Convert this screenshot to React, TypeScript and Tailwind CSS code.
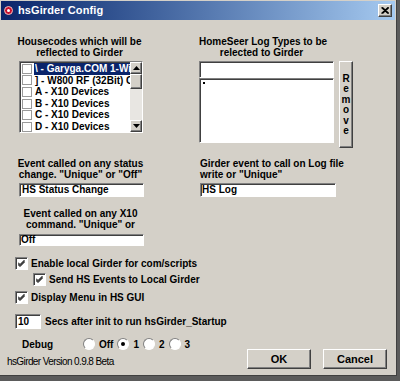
// App.tsx
// hsGirder Config — classic Win2k-style dialog.

const sunken =
  'border border-t-[#808080] border-l-[#808080] border-r-white border-b-white shadow-[inset_1px_1px_0_#404040]';
const raised =
  'border border-t-white border-l-white border-r-[#404040] border-b-[#404040] shadow-[inset_-1px_-1px_0_#808080]';

function Tick() {
  return (
    <svg width="7" height="7" viewBox="0 0 7 7" className="block">
      <path d="M0 2.5 L2 4.5 L6.5 0 M0 3.5 L2 5.5 L6.5 1 M0 4.5 L2 6.5 L6.5 2" stroke="#000" strokeWidth="1" fill="none" />
    </svg>
  );
}

function CheckBox({ checked = false }: { checked?: boolean }) {
  return (
    <span className={`w-[13px] h-[13px] bg-white flex items-center justify-center shrink-0 ${sunken}`}>
      {checked && <Tick />}
    </span>
  );
}

function Radio({ on = false }: { on?: boolean }) {
  return (
    <span className="relative w-[12px] h-[12px] rounded-full bg-white border border-t-[#808080] border-l-[#808080] border-r-white border-b-white shrink-0 flex items-center justify-center">
      {on && <span className="w-[4px] h-[4px] rounded-full bg-black" />}
    </span>
  );
}

function ListRow({ text, selected = false }: { text: string; selected?: boolean }) {
  return (
    <div className="h-[11.6px] flex items-center whitespace-nowrap">
      <span className="w-[10px] h-[10px] bg-white border border-[#9a9a9a] shrink-0 ml-[2px] mr-[2px]" />
      <span className={`px-[1px] leading-[11.6px] flex-1 ${selected ? 'bg-[#0a246a] text-white' : ''}`}>{text}</span>
    </div>
  );
}

function ScrollBar() {
  return (
    <div className="w-[12px] flex flex-col bg-[#e8e6e2] shrink-0">
      <div className={`h-[12px] bg-[#d4d0c8] flex items-center justify-center ${raised}`}>
        <svg width="7" height="4" viewBox="0 0 7 4"><path d="M3.5 0 L7 4 L0 4 Z" fill="#000" /></svg>
      </div>
      <div className={`h-[15px] bg-[#d4d0c8] ${raised}`} />
      <div className="flex-1" />
      <div className={`h-[12px] bg-[#d4d0c8] flex items-center justify-center ${raised}`}>
        <svg width="7" height="4" viewBox="0 0 7 4"><path d="M0 0 L7 0 L3.5 4 Z" fill="#000" /></svg>
      </div>
    </div>
  );
}

export default function App() {
  return (
    <div className="w-[400px] h-[381px] bg-[#5b5b5b] font-['Liberation_Sans',Arial,sans-serif] text-[10px] text-black select-none">
      <div className="w-[397px] h-[376px] bg-[#d4d0c8] border-r border-b border-[#404040] flex flex-col">
        {/* Title bar */}
        <div className="h-[19px] mx-[1px] mt-[1px] bg-gradient-to-r from-[#0a246a] to-[#a6caf0] flex items-center px-[3px]">
          <span className="w-[9px] h-[9px] rounded-full bg-[#c8102e] border border-[#f0c0c0] flex items-center justify-center">
            <span className="w-[3px] h-[3px] rounded-full bg-white" />
          </span>
          <span className="ml-[5px] text-white font-bold text-[11px] tracking-[0.1px]">hsGirder Config</span>
          <span className={`ml-auto w-[14px] h-[13px] bg-[#d4d0c8] flex items-center justify-center ${raised}`}>
            <svg width="8" height="7" viewBox="0 0 8 7"><path d="M0.5 0.5 L7 6.5 M7 0.5 L0.5 6.5 M1.5 0.5 L8 6.5 M8 0.5 L1.5 6.5" stroke="#000" strokeWidth="1.1" /></svg>
          </span>
        </div>

        {/* Body */}
        <div className="flex-1 flex flex-col pl-[17px] pr-[8px] pt-[16px] font-bold">
          {/* Top section */}
          <div className="flex">
            <div className="w-[125px] flex flex-col">
              <div className="text-center leading-[11px] h-[22px] whitespace-nowrap">
                Housecodes which will be<br />reflected to Girder
              </div>
              <div className={`mt-[3px] ml-[2px] w-[124px] h-[72px] bg-white flex ${sunken}`}>
                <div className="flex-1 overflow-hidden pt-[1px]">
                  <ListRow text="\ - Garyga.COM 1-Wire" selected />
                  <ListRow text="] - W800 RF (32Bit) Conv" />
                  <ListRow text="A - X10 Devices" />
                  <ListRow text="B - X10 Devices" />
                  <ListRow text="C - X10 Devices" />
                  <ListRow text="D - X10 Devices" />
                </div>
                <ScrollBar />
              </div>
            </div>

            <div className="ml-[57px] flex flex-col">
              <div className="w-[125px] text-center leading-[11px] h-[22px] whitespace-nowrap">
                HomeSeer Log Types to be<br />relected to Girder
              </div>
              <div className="mt-[3px] flex">
                <div className="w-[135px] flex flex-col">
                  <div className={`h-[17px] bg-white ${sunken}`} />
                  <div className={`h-[65px] bg-white pl-[3px] pt-[3px] ${sunken}`}>
                    <span className="block w-[2px] h-[2px] bg-black" />
                  </div>
                </div>
                <div className={`ml-[5px] w-[14px] h-[87px] bg-[#d4d0c8] flex flex-col items-center pt-[12px] text-[10px] ${raised}`}>
                  <span className="h-[10.4px] leading-[10px]">R</span>
                  <span className="h-[10.4px] leading-[10px]">e</span>
                  <span className="h-[10.4px] leading-[10px]">m</span>
                  <span className="h-[10.4px] leading-[10px]">o</span>
                  <span className="h-[10.4px] leading-[10px]">v</span>
                  <span className="h-[10.4px] leading-[10px]">e</span>
                </div>
              </div>
            </div>
          </div>

          {/* Event section */}
          <div className="flex mt-[10px]">
            <div className="w-[127px] flex flex-col">
              <div className="text-center leading-[11px] h-[22px] whitespace-nowrap">
                Event called on any status<br />change. "Unique" or "Off"
              </div>
              <div className={`mt-[3px] ml-[2px] h-[14px] bg-white leading-[12px] px-[2px] ${sunken}`}>HS Status Change</div>
              <div className="mt-[11px] text-center leading-[11px] h-[22px] whitespace-nowrap">
                Event called on any X10<br />command. "Unique" or
              </div>
              <div className={`mt-[4px] ml-[2px] h-[12px] bg-white leading-[10px] px-[1px] ${sunken}`}>Off</div>
            </div>
            <div className="ml-[56px] flex flex-col">
              <div className="leading-[11px] h-[22px] whitespace-nowrap">
                Girder event to call on Log file<br />write or "Unique"
              </div>
              <div className={`mt-[3px] w-[136px] h-[14px] bg-white leading-[12px] px-[1px] ${sunken}`}>HS Log</div>
            </div>
          </div>

          {/* Options */}
          <div className="mt-[11px] flex flex-col -ml-[2px]">
            <div className="flex items-center h-[13px] gap-[3px]">
              <CheckBox checked />
              <span>Enable local Girder for com/scripts</span>
            </div>
            <div className="flex items-center h-[13px] gap-[3px] ml-[18px] mt-[3px]">
              <CheckBox checked />
              <span>Send HS Events to Local Girder</span>
            </div>
            <div className="flex items-center h-[13px] gap-[3px] mt-[5px]">
              <CheckBox checked />
              <span>Display Menu in HS GUI</span>
            </div>
            <div className="flex items-center mt-[10px]">
              <div className={`w-[26px] h-[15px] bg-white leading-[13px] px-[2px] ${sunken}`}>10</div>
              <span className="ml-[4px]">Secs after init to run hsGirder_Startup</span>
            </div>
          </div>

          {/* Footer */}
          <div className="mt-[8px] flex">
            <div className="flex flex-col -ml-[10px]">
              <div className="flex items-center h-[14px]">
                <span className="ml-[15px] w-[61px]">Debug</span>
                <Radio />
                <span className="ml-[4px] mr-[4px]">Off</span>
                <Radio on />
                <span className="ml-[4px] mr-[4px]">1</span>
                <Radio />
                <span className="ml-[4px] mr-[4px]">2</span>
                <Radio />
                <span className="ml-[4px]">3</span>
              </div>
              <div className="mt-[3px] font-normal text-[10px] tracking-[-0.6px]">hsGirder Version 0.9.8 Beta</div>
            </div>
            <div className="ml-auto mt-[12px] flex gap-[12px] mr-[1px]">
              <button className={`w-[64px] h-[20px] bg-[#d4d0c8] font-bold text-[11px] ${raised}`}>OK</button>
              <button className={`w-[64px] h-[20px] bg-[#d4d0c8] font-bold text-[11px] ${raised}`}>Cancel</button>
            </div>
          </div>
        </div>
      </div>
    </div>
  );
}
